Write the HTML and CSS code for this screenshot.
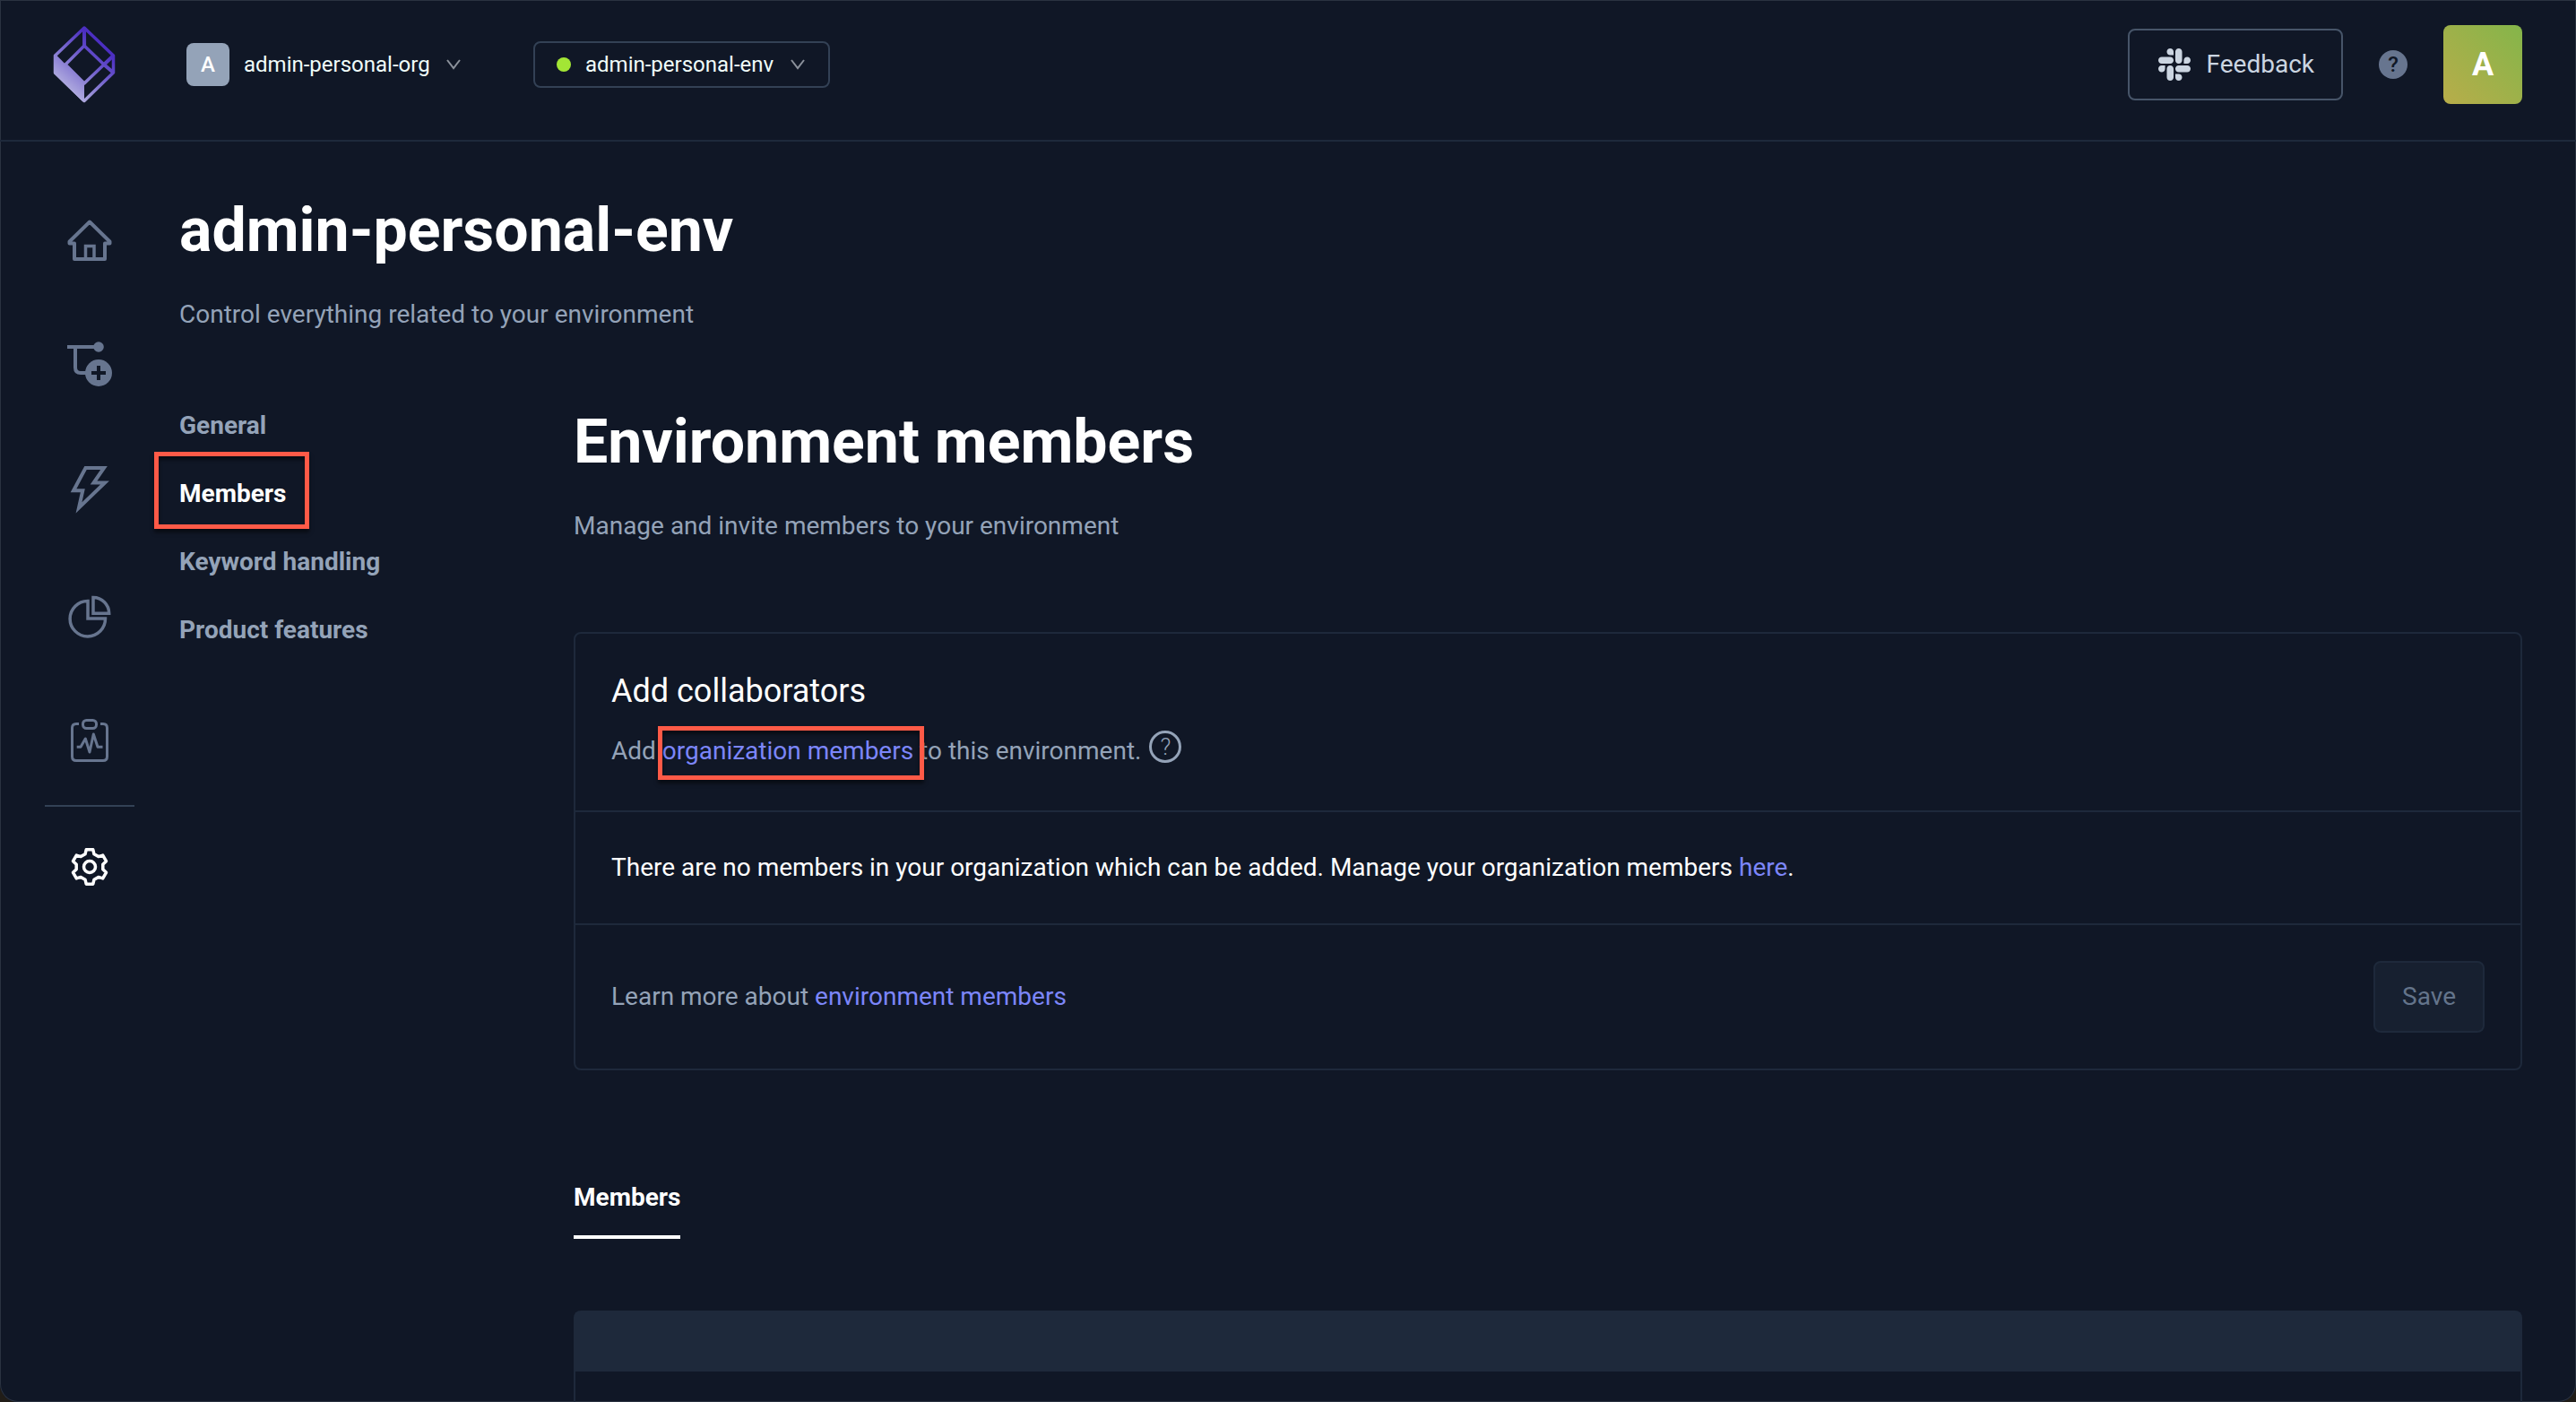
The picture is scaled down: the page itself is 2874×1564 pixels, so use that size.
FILE: index.html
```html
<!DOCTYPE html>
<html lang="en">
<head>
<meta charset="utf-8">
<meta name="viewport" content="width=device-width, initial-scale=1">
<title>Environment members</title>
<link rel="stylesheet" href="styles.css">
</head>
<body>
<div class="app">
  <header class="topbar">
    <a class="logo" href="#" aria-label="Home">
      <svg width="72" height="90" viewBox="0 0 72 90" fill="none">
        <defs>
          <linearGradient id="logo-fill" gradientUnits="userSpaceOnUse" x1="12" y1="76" x2="56" y2="26">
            <stop offset="0" stop-color="#bcb9e2"/>
            <stop offset=".45" stop-color="#8478d2"/>
            <stop offset="1" stop-color="#4c2fc2"/>
          </linearGradient>
        </defs>
        <g stroke="url(#logo-fill)" stroke-width="3.500" stroke-linejoin="round">
          <path d="M36 4 68.500 35V54L36 85.500 3.500 54V35Z"/>
          <path d="M36 24 58 45 36 66 15 45Z"/>
          <path d="M36 4 36.100 25M58 45 68.500 35M58 45 68.500 54" stroke-width="4"/>
        </g>
        <path d="M2 35 5 34.500 36 66V87L34 86 2 55Z" fill="url(#logo-fill)"/>
      </svg>
    </a>
    <div class="org">
      <span class="org-badge">A</span>
      <select class="picker" aria-label="Organization"><option>admin-personal-org</option></select>
      <svg class="chevron" width="16" height="12" viewBox="0 0 16 12"><path d="M1 1 8 10 15 1"/></svg>
    </div>
    <div class="env">
      <span class="env-dot"></span>
      <select class="picker" aria-label="Environment"><option>admin-personal-env</option></select>
      <svg class="chevron" width="16" height="12" viewBox="0 0 16 12"><path d="M1 1 8 10 15 1"/></svg>
    </div>
    <div class="actions">
      <button class="feedback" type="button">
        <svg width="36" height="36" viewBox="0 32 448 448" fill="currentColor"><path d="M94.12 315.1c0 25.9-21.16 47.06-47.06 47.06S0 341 0 315.1c0-25.9 21.16-47.06 47.06-47.06h47.06v47.06zm23.72 0c0-25.9 21.16-47.06 47.06-47.06s47.06 21.16 47.06 47.06v117.84c0 25.9-21.16 47.06-47.06 47.06s-47.06-21.16-47.06-47.06V315.1zm47.06-188.98c-25.9 0-47.06-21.16-47.06-47.06S139 32 164.9 32s47.06 21.16 47.06 47.06v47.06H164.9zm0 23.72c25.9 0 47.06 21.16 47.06 47.06s-21.16 47.06-47.06 47.06H47.06C21.16 243.96 0 222.8 0 196.9s21.16-47.06 47.06-47.06H164.9zm188.98 47.06c0-25.9 21.16-47.06 47.06-47.06 25.9 0 47.06 21.16 47.06 47.06s-21.16 47.06-47.06 47.06h-47.06V196.9zm-23.72 0c0 25.9-21.16 47.06-47.06 47.06-25.9 0-47.06-21.16-47.06-47.06V79.06c0-25.9 21.16-47.06 47.06-47.06 25.9 0 47.06 21.16 47.06 47.06V196.9zM283.1 385.88c25.9 0 47.06 21.16 47.06 47.06 0 25.9-21.16 47.06-47.06 47.06-25.9 0-47.06-21.16-47.06-47.06v-47.06h47.06zm0-23.72c-25.9 0-47.06-21.16-47.06-47.06 0-25.9 21.16-47.06 47.06-47.06h117.84c25.9 0 47.06 21.16 47.06 47.06 0 25.9-21.16 47.06-47.06 47.06H283.1z"/></svg>
        Feedback
      </button>
      <button class="help" type="button" title="Help">?</button>
      <button class="avatar" type="button">A</button>
    </div>
  </header>

  <div class="shell">
    <nav class="rail" aria-label="Primary">
      <a href="#" aria-label="Home"><svg viewBox="0 0 56 56" stroke-width="4"><path d="M28 7.500 5.500 29.500V31.500H11V49H45V31.500H50.500V29.500Z" stroke-linejoin="round"/><path d="M23.500 49V34.500H33V49" stroke-width="3.500"/></svg></a>
      <a href="#" aria-label="Workflows"><svg viewBox="0 0 56 56" stroke-width="4"><path d="M3 7H38M12 7V30Q12 36 18 36H24"/><circle class="solid" cx="38" cy="7" r="5.800"/><circle class="solid" cx="38" cy="36" r="15"/><path class="cut" d="M30 36H46M38 28V44"/></svg></a>
      <a href="#" aria-label="Events"><svg viewBox="0 0 56 56" stroke-width="4"><path d="M23.500 2H44L32.500 18.500H45L16 46.500 20.300 27.300H10Z"/></svg></a>
      <a href="#" aria-label="Analytics"><svg viewBox="0 0 56 56" stroke-width="3.500"><path d="M26 30H45.500A19.700 19.700 0 1 1 26 10.500Z"/><path d="M32 6.500V24.200H49.700A17.700 17.700 0 0 0 32 6.500Z"/></svg></a>
      <a href="#" aria-label="Activity"><svg viewBox="0 0 56 56" stroke-width="3" stroke-linejoin="round"><path d="M16 7.500H13Q8.500 7.500 8.500 12V44Q8.500 48.500 13 48.500H43Q47.500 48.500 47.500 44V12Q47.500 7.500 43 7.500H40"/><rect x="20.500" y="3.500" width="15" height="9" rx="4"/><path d="M13.700 33.300H18L23.300 24 28 39 32.300 19 37 33.300H42.500"/></svg></a>
      <a class="current" href="#" aria-label="Settings"><svg viewBox="0 0 56 56" stroke-width="3.500" stroke-linejoin="round"><g transform="translate(28 28)"><circle r="6.500"/><path d="M-5-14.200-3.800-19.200H3.800L5-14.200 9.800-11.400 14.700-12.900 18.500-6.300 14.800-2.800V2.800L18.500 6.300 14.700 12.900 9.800 11.400 5 14.200 3.800 19.200H-3.800L-5 14.200-9.800 11.400-14.700 12.900-18.500 6.300-14.800 2.800V-2.800L-18.500-6.300-14.700-12.900-9.800-11.400Z"/></g></svg></a>
    </nav>

    <main class="page">
      <h1 class="title">admin-personal-env</h1>
      <p class="subtitle">Control everything related to your environment</p>

      <div class="columns">
        <nav class="sections" aria-label="Settings">
          <a href="#">General</a>
          <a class="current" href="#" aria-current="page">Members<span class="marker marker-nav"></span></a>
          <a href="#">Keyword handling</a>
          <a href="#">Product features</a>
        </nav>

        <div class="content">
          <h2 class="title">Environment members</h2>
          <p class="subtitle">Manage and invite members to your environment</p>

          <section class="card">
            <div class="card-head">
              <h3>Add collaborators</h3>
              <p>Add <span class="marked"><a href="#">organization members</a><span class="marker marker-link"></span></span> to this environment.<button class="hint" type="button" title="More information">?</button></p>
            </div>
            <div class="card-body">There are no members in your organization which can be added. Manage your organization members <a href="#">here</a>.</div>
            <div class="card-foot">
              <p>Learn more about <a href="#">environment members</a></p>
              <button class="save" type="button" disabled>Save</button>
            </div>
          </section>

          <div class="tabs" role="tablist"><button class="tab" type="button" role="tab" aria-selected="true">Members</button></div>

          <div class="members">
            <table aria-label="Members">
              <thead><tr><th></th></tr></thead>
              <tbody></tbody>
            </table>
          </div>
        </div>
      </div>
    </main>
  </div>
</div>
</body>
</html>
```
FILE: styles.css
```css
:root {
  --bg: #101726;
  --line: #1e293b;
  --line-strong: #334155;
  --muted: #94a3b8;
  --icon: #67758f;
  --text: #ffffff;
  --link: #7c86fa;
  --mark: #ff5a47;
}

* { box-sizing: border-box; }

html { background: #211d18; }

body {
  margin: 0;
  color: var(--text);
  font: 400 28px/44px Roboto, "Liberation Sans", sans-serif;
}

h1, h2, h3, p { margin: 0; }
a { color: var(--link); text-decoration: none; }
button, select { font: inherit; color: inherit; }
button { padding: 0; border: 0; background: none; }
svg { display: block; flex: none; }

.app {
  display: flex;
  flex-direction: column;
  min-height: 100vh;
  border-radius: 0 0 20px 20px;
  background: var(--bg);
  box-shadow: inset 0 0 0 1px #2a3240;
}

/* Top bar */
.topbar {
  display: flex;
  align-items: center;
  height: 158px;
  padding: 0 60px 12px 58px;
  border-bottom: 2px solid var(--line);
}

.org, .env, .actions, .feedback { display: flex; align-items: center; }

.org { margin-left: 78px; }

.org-badge {
  width: 48px;
  border-radius: 8px;
  background: var(--muted);
  font-size: 24px;
  font-weight: 500;
  line-height: 48px;
  text-align: center;
}

.picker {
  margin: 0 18px 0 16px;
  padding: 0;
  border: 0;
  appearance: none;
  background: none;
  color: #f0fdfa;
  font-size: 24px;
  line-height: 32px;
}

.chevron { fill: none; stroke: #8b919b; stroke-width: 2; }

.env {
  height: 52px;
  margin-left: 81px;
  padding: 0 26px 0 24px;
  border: 2px solid var(--line-strong);
  border-radius: 8px;
}

.env-dot {
  width: 16px;
  height: 16px;
  border-radius: 50%;
  background: #a3e635;
}

.actions { margin-left: auto; }

.feedback {
  gap: 18px;
  height: 80px;
  padding: 0 30px 0 32px;
  border: 2px solid #475569;
  border-radius: 8px;
  color: #cbd5e1;
}

.help {
  width: 32px;
  margin: 0 40px;
  border-radius: 50%;
  background: var(--icon);
  color: var(--bg);
  font-size: 24px;
  font-weight: 500;
  line-height: 32px;
}

.avatar {
  width: 88px;
  border-radius: 8px;
  background: linear-gradient(45deg, #b8ad4a, #84b54a);
  font-size: 36px;
  font-weight: 700;
  line-height: 88px;
}

/* Body */
.shell { display: flex; flex: 1; }

.rail { width: 200px; padding: 40px 50px 0; }

.rail a {
  display: flex;
  align-items: center;
  justify-content: center;
  height: 140px;
  color: var(--icon);
}

.rail a.current {
  padding-bottom: 4px;
  border-top: 2px solid var(--line-strong);
  color: var(--text);
}

.rail svg {
  width: 56px;
  height: 56px;
  overflow: visible;
  fill: none;
  stroke: currentColor;
}

.rail .solid { fill: currentColor; stroke: none; }
.rail .cut { stroke: var(--bg); }

.page {
  display: flex;
  flex: 1;
  flex-direction: column;
  padding: 57px 60px 0 0;
}

.title { font-size: 68px; font-weight: 700; line-height: 84px; }
.subtitle { margin-top: 30px; color: var(--muted); }

.columns {
  display: grid;
  flex: 1;
  grid-template-columns: 440px 1fr;
  margin-top: 64px;
}

.sections a {
  display: block;
  position: relative;
  width: fit-content;
  color: var(--muted);
  font-weight: 700;
  line-height: 76px;
}

.sections a.current { color: var(--text); }

.content { display: flex; flex-direction: column; padding-top: 14px; }

/* Highlight frames drawn over the text */
.marker {
  position: absolute;
  border: 5px solid var(--mark);
  box-shadow: 0 4px 4px rgba(0, 0, 0, .5), inset 0 4px 4px rgba(0, 0, 0, .5);
}

.marker-nav { inset: -9px -26px -1px -28px; }
.marker-link { inset: -11px -12px -16px -5px; }
.marked { position: relative; }

/* Card */
.card {
  margin-top: 96px;
  border: 2px solid var(--line);
  border-radius: 8px;
}

.card-head, .card-body, .card-foot { padding: 40px; }
.card-head { padding-bottom: 44px; }
.card-head, .card-body { border-bottom: 2px solid var(--line); }
.card-head p, .card-foot p { color: var(--muted); }
.card h3 { margin-bottom: 20px; font-size: 36px; font-weight: 400; line-height: 48px; }

.hint {
  width: 36px;
  height: 36px;
  margin-left: 9px;
  border: 3px solid var(--muted);
  border-radius: 50%;
  font-size: 26px;
  font-weight: 300;
  line-height: 30px;
  vertical-align: 5px;
  color: var(--muted);
}

.card-foot { display: flex; align-items: center; justify-content: space-between; }

.save {
  height: 80px;
  padding: 0 30px;
  border: 2px solid var(--line);
  border-radius: 8px;
  background: #172030;
  color: #64748b;
}

.tabs { display: flex; margin-top: 120px; }

.tab {
  padding-bottom: 20px;
  border-bottom: 4px solid var(--text);
  font-weight: 700;
}

/* Members table */
.members {
  flex: 1;
  margin-top: 80px;
  border: 2px solid var(--line);
  border-bottom: 0;
  border-radius: 8px 8px 0 0;
}

.members table { width: 100%; border-collapse: collapse; }
.members th { height: 66px; padding: 0; background: var(--line); }
```
